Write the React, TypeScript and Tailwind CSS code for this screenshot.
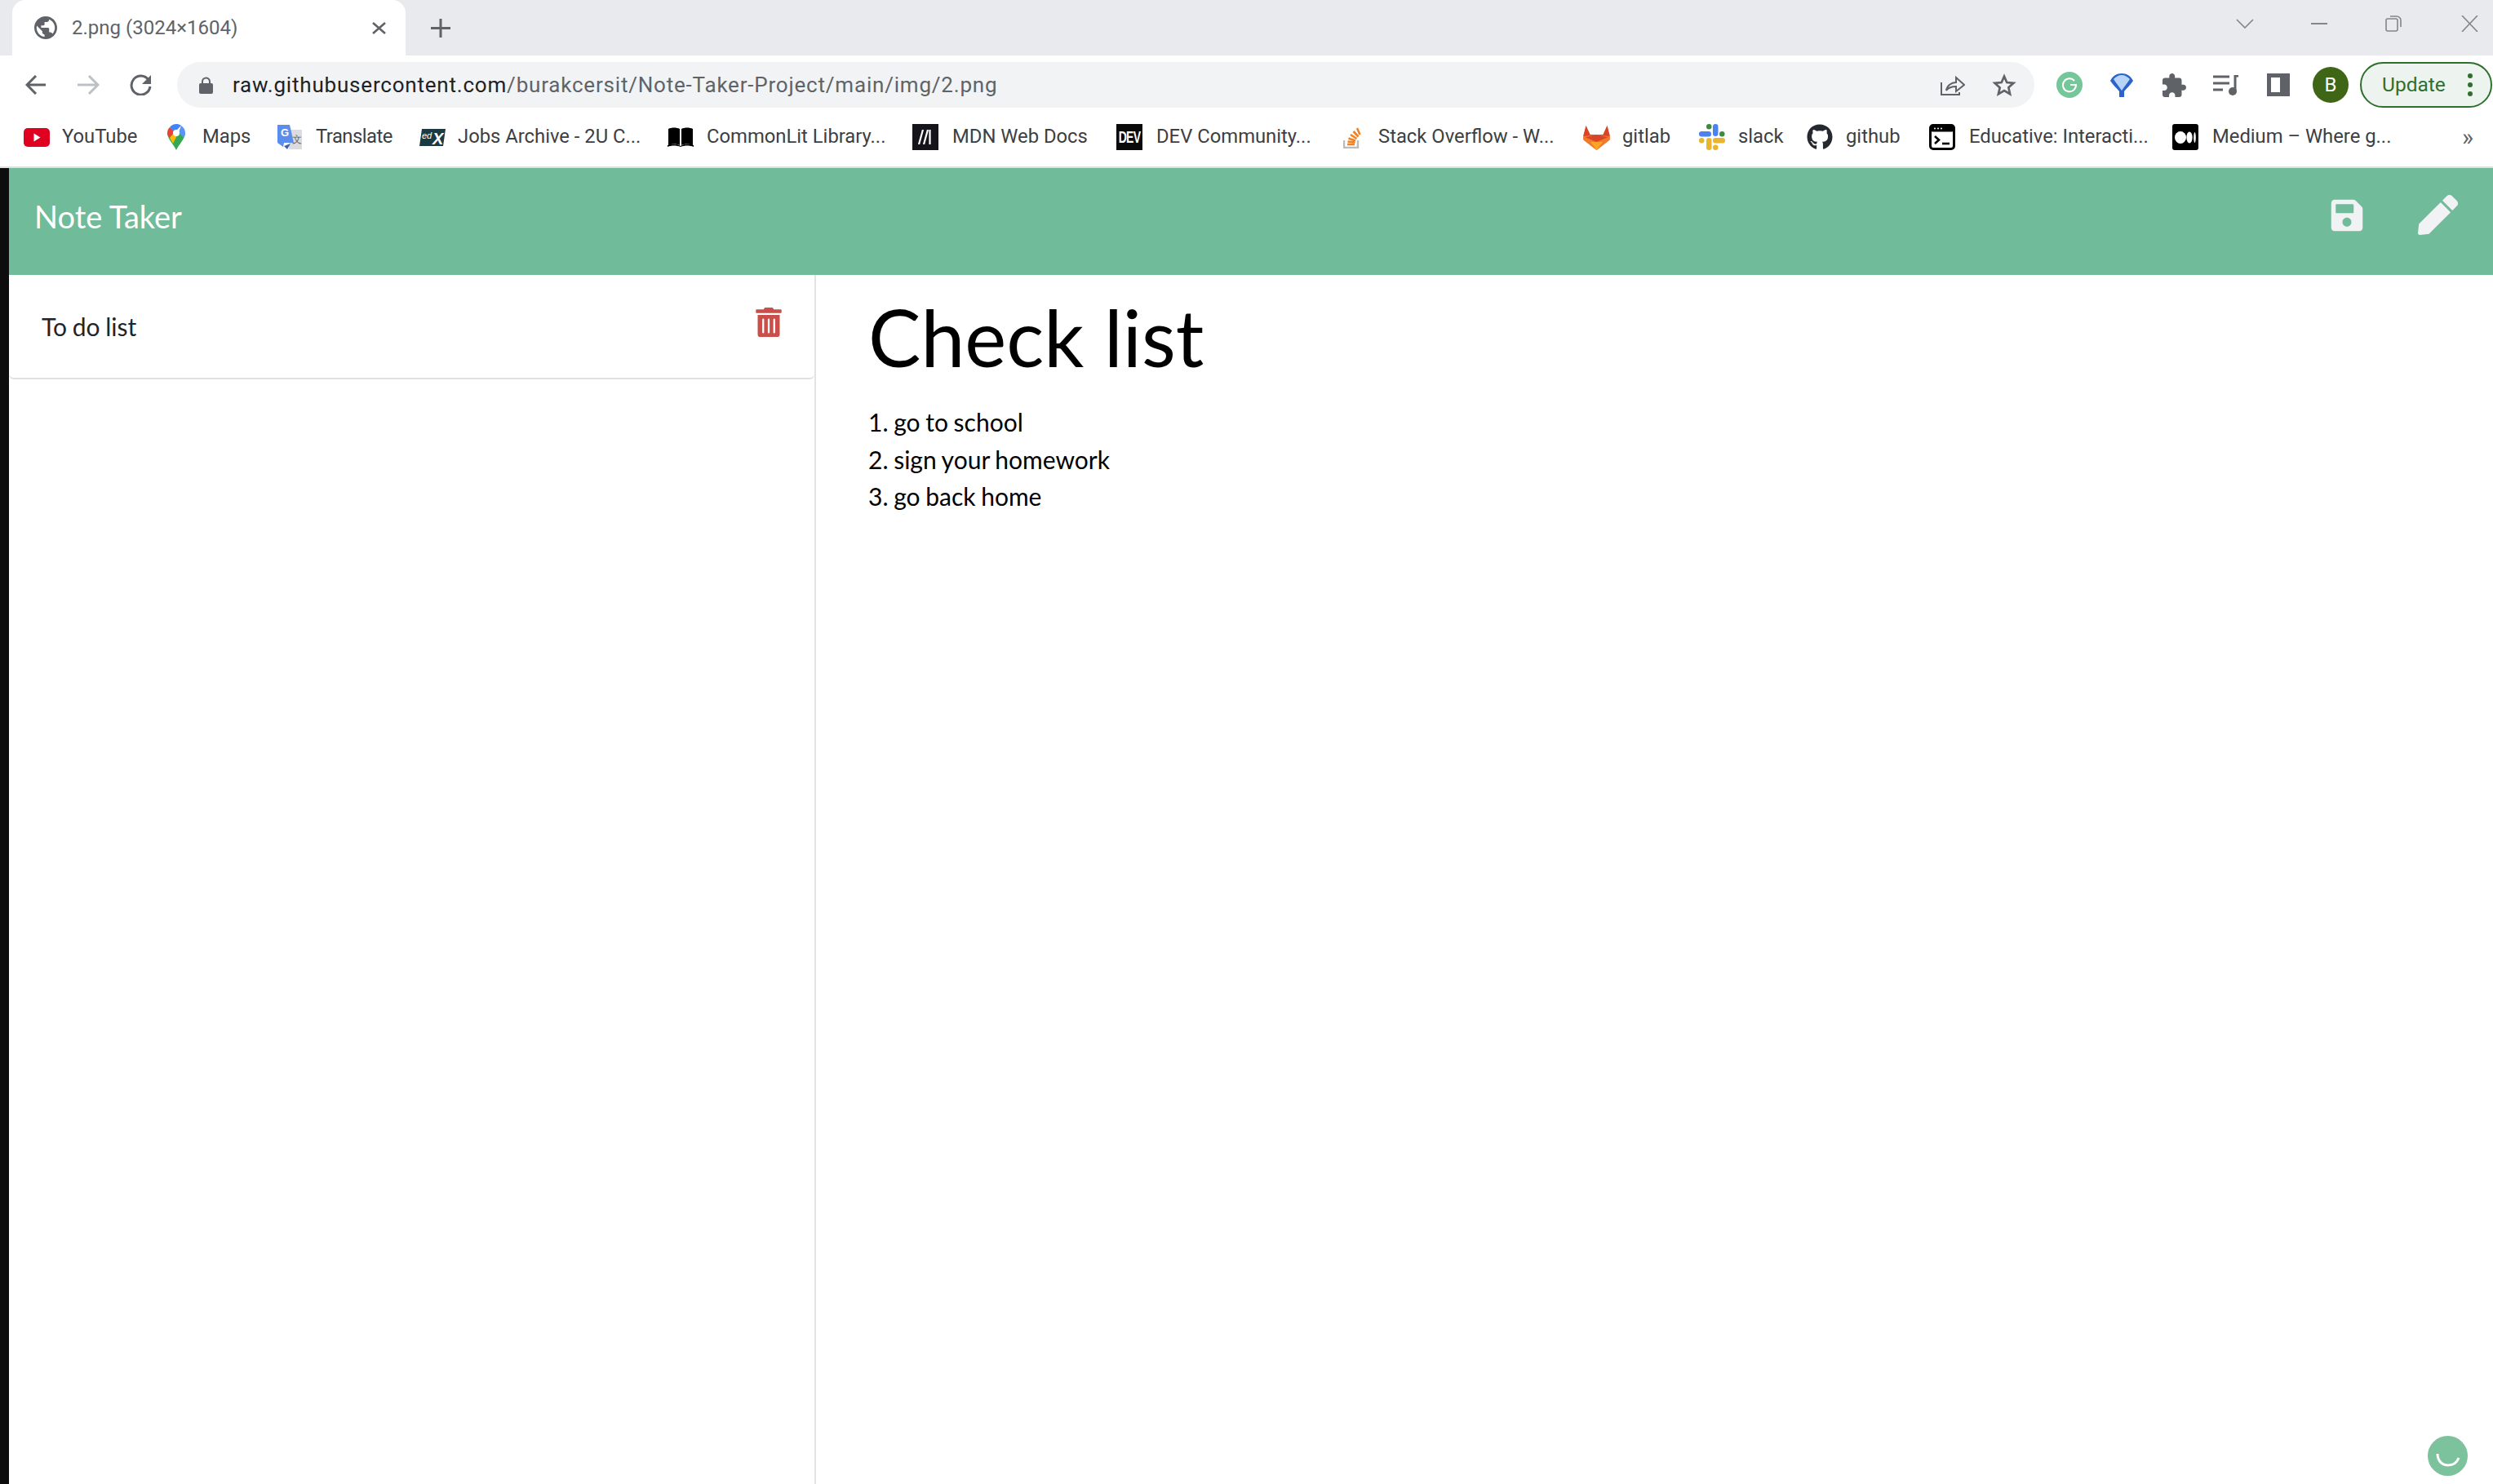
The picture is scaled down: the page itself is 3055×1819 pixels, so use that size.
import React from "react";
import { FaSave, FaPen, FaTrashAlt, FaGithub } from "react-icons/fa";

const Ic = ({ w, h, vb, children, cls = "" }: { w: number; h: number; vb: string; children: React.ReactNode; cls?: string }) => (
  <svg width={w} height={h} viewBox={vb} className={"shrink-0 " + cls}>{children}</svg>
);

const YouTube = () => (
  <Ic w={32} h={23} vb="0 0 32 23"><rect width="32" height="23" rx="5" fill="#e0001f" /><path d="M12.5 6.5v10l8-5z" fill="#fff" /></Ic>
);
const Maps = () => (
  <Ic w={22} h={32} vb="0 0 22 32">
    <path d="M11 32C8 25 0 18 0 11h22c0 7-8 14-11 21z" fill="#34a853" />
    <path d="M0 11C0 8 1 6 3 4l6 5-6 8C1 15 0 13 0 11z" fill="#ea4335" />
    <path d="M3 17l6-7h5L7 24z" fill="#fbbc04" />
    <path d="M3 4a11 11 0 0 1 8-4c2 0 4 .6 6 2l-8 8z" fill="#4285f4" />
    <path d="M17 2c3 2 5 5 5 9 0 2-1 4-2 6l-6-7z" fill="#5a95f5" />
    <circle cx="11" cy="11" r="4" fill="#fff" />
  </Ic>
);
const Translate = () => (
  <Ic w={30} h={30} vb="0 0 30 30">
    <path d="M14 6h16v24H14z" fill="#dadce0" />
    <path d="M0 0h15l5 22H8l-1 5-7-5z" fill="#5b8def" />
    <path d="M16 23l-4 7-4-4z" fill="#3c5fb8" />
    <text x="4" y="14" fontSize="13" fontWeight="700" fill="#fff" fontFamily="Liberation Sans">G</text>
    <text x="18" y="22" fontSize="12" fill="#5f6368" fontFamily="Liberation Serif">文</text>
  </Ic>
);
const Edx = () => (
  <Ic w={32} h={21} vb="0 0 32 21">
    <path d="M3 0h29l-3 21H0z" fill="#1c3a41" />
    <text x="3" y="12" fontSize="11" fontStyle="italic" fill="#fff" fontFamily="Liberation Sans">ed</text>
    <text x="16" y="19" fontSize="20" fontWeight="700" fontStyle="italic" fill="#fff" fontFamily="Liberation Sans">X</text>
  </Ic>
);
const Book = () => (
  <Ic w={32} h={24} vb="0 0 32 24">
    <path d="M1 2c4-2 10-2 14 0v20c-4-2-10-2-14 0zM17 2c4-2 10-2 14 0v20c-4-2-10-2-14 0z" fill="#000" />
    <path d="M0 22c5-2 11-2 16 1 5-3 11-3 16-1v2c-5-2-11-2-16 0-5-2-11-2-16 0z" fill="#000" />
  </Ic>
);
const Mdn = () => (
  <div className="w-[32px] h-[32px] bg-[#15141a] flex items-center justify-center shrink-0">
    <Ic w={20} h={18} vb="0 0 20 18"><path d="M7 0L2 18M13 0L8 18M15.500 0v18" fill="none" stroke="#fff" strokeWidth="2.200" /></Ic>
  </div>
);
const Dev = () => (
  <div className="w-[32px] h-[32px] bg-[#0a0a0a] flex items-center justify-center shrink-0 text-white text-[14px] font-bold font-['Liberation_Sans'] tracking-[-0.8px]">
    <span className="scale-y-[1.4]">DEV</span>
  </div>
);
const So = () => (
  <Ic w={22} h={28} vb="0 0 22 28">
    <path d="M1 18v9h17v-9" fill="none" stroke="#bcbbbb" strokeWidth="2.4" />
    <path d="M5 23h9M5.500 19.500l9 1M6.500 15.500l8.500 3M9 11l7.500 5M12.500 7l6 6.500M17 3l3.500 8" stroke="#f48024" strokeWidth="2.6" fill="none" />
  </Ic>
);
const Gitlab = () => (
  <Ic w={33} h={31} vb="0 0 33 31">
    <path d="M16.500 31L0 18 3.500 1l5 11h16l5-11L33 18z" fill="#fc6d26" />
    <path d="M3.500 1l5 11h16l5-11L33 14 16.500 12 0 14z" fill="#d8442a" />
    <path d="M0 16l16.500-4L33 16l-9 5H9z" fill="#d8442a" />
    <path d="M0 14l16.500 7L33 14l-1 5-15.500 12L1 19z" fill="#ee7a2d" />
    <path d="M16.500 31L9 21h15z" fill="#fca326" />
  </Ic>
);
const Slack = () => (
  <Ic w={32} h={32} vb="0 0 32 32">
    <rect x="0" y="9" width="15" height="6.500" rx="3.200" fill="#4c82f0" />
    <rect x="9" y="0" width="6.500" height="6.500" rx="3.200" fill="#3e8a3e" />
    <rect x="17" y="0" width="6.500" height="15" rx="3.200" fill="#4c82f0" />
    <rect x="25" y="9" width="6.500" height="6.500" rx="3.200" fill="#3e8a3e" />
    <rect x="0" y="17" width="6.500" height="6.500" rx="3.200" fill="#e9b52f" />
    <rect x="9" y="17" width="6.500" height="15" rx="3.200" fill="#e9b52f" />
    <rect x="17" y="17" width="15" height="6.500" rx="3.200" fill="#e9b52f" />
    <rect x="17" y="25.500" width="6.500" height="6.500" rx="3.200" fill="#e9b52f" />
  </Ic>
);
const Educ = () => (
  <Ic w={32} h={32} vb="0 0 32 32">
    <rect x="1.500" y="1.500" width="29" height="29" rx="3.500" fill="#fff" stroke="#000" strokeWidth="3" />
    <rect x="1.500" y="1.500" width="29" height="8" rx="3" fill="#000" />
    <circle cx="7" cy="5.500" r="1" fill="#fff" /><circle cx="11" cy="5.500" r="1" fill="#fff" /><circle cx="15" cy="5.500" r="1" fill="#fff" />
    <path d="M7 15l5 4.500-5 4.500" fill="none" stroke="#000" strokeWidth="2.600" />
    <path d="M16 24h9" stroke="#000" strokeWidth="2.600" />
  </Ic>
);
const Medium = () => (
  <div className="w-[32px] h-[32px] rounded-[3px] bg-black flex items-center justify-center shrink-0">
    <Ic w={26} h={15} vb="0 0 26 15"><ellipse cx="7" cy="7.500" rx="7" ry="7.500" fill="#fff" /><ellipse cx="18" cy="7.500" rx="3.600" ry="7" fill="#fff" /><ellipse cx="24.500" cy="7.500" rx="1.300" ry="6.500" fill="#fff" /></Ic>
  </div>
);

const marks = [
  { t: "YouTube", icon: <YouTube />, c: "w-[92px]", g: "ml-[0px] gap-[15px]" },
  { t: "Maps", icon: <Maps />, c: "w-[60px]", g: "ml-[37px] gap-[21px]" },
  { t: "Translate", icon: <Translate />, c: "w-[97px] tracking-[-0.5px]", g: "ml-[32px] gap-[17px]" },
  { t: "Jobs Archive - 2U C...", icon: <Edx />, c: "w-[224px]", g: "ml-[30px] gap-[15px]" },
  { t: "CommonLit Library...", icon: <Book />, c: "w-[219px]", g: "ml-[33px] gap-[16px]" },
  { t: "MDN Web Docs", icon: <Mdn />, c: "w-[169px]", g: "ml-[33px] gap-[17px]" },
  { t: "DEV Community...", icon: <Dev />, c: "w-[191px]", g: "ml-[32px] gap-[17px]" },
  { t: "Stack Overflow - W...", icon: <So />, c: "w-[219px]", g: "ml-[38px] gap-[21px]" },
  { t: "gitlab", icon: <Gitlab />, c: "w-[59px]", g: "ml-[32px] gap-[15px]" },
  { t: "slack", icon: <Slack />, c: "w-[50px]", g: "ml-[35px] gap-[16px]" },
  { t: "github", icon: <FaGithub className="text-[32px] text-[#24292f] shrink-0" />, c: "w-[69px]", g: "ml-[34px] gap-[16px]" },
  { t: "Educative: Interacti...", icon: <Educ />, c: "w-[215px]", g: "ml-[33px] gap-[17px]" },
  { t: "Medium – Where g...", icon: <Medium />, c: "w-[219px]", g: "ml-[34px] gap-[17px]" },
];

export default function App() {
  return (
    <div className="relative w-[3055px] h-[1819px] flex flex-col overflow-hidden bg-white font-['Roboto']">
      {/* tab strip */}
      <div className="h-[68px] bg-[#e8eaed] flex items-end shrink-0">
        <div className="ml-[15px] w-[482px] h-[68px] bg-white rounded-t-[16px] flex items-center pl-[27px]">
          <svg width="28" height="28" viewBox="2 2 20 20" className="shrink-0">
            <path fill="#5f6368" d="M12 2C6.480 2 2 6.480 2 12s4.480 10 10 10 10-4.480 10-10S17.520 2 12 2zm-1 17.930c-3.950-.490-7-3.850-7-7.930 0-.620.080-1.210.210-1.790L9 15v1c0 1.100.900 2 2 2v1.930zm6.900-2.540c-.260-.810-1-1.390-1.900-1.390h-1v-3c0-.550-.450-1-1-1H8v-2h2c.550 0 1-.450 1-1V7h2c1.100 0 2-.900 2-2v-.410c2.930 1.190 5 4.060 5 7.410 0 2.080-.800 3.970-2.100 5.390z" />
          </svg>
          <span className="ml-[18px] w-[200px] text-[24px] text-[#5f6368] whitespace-nowrap">2.png (3024×1604)</span>
          <svg width="17" height="15" viewBox="0 0 17 15" className="ml-[168px]"><path d="M1 1l15 13M16 1L1 14" stroke="#5f6368" strokeWidth="2.6" /></svg>
        </div>
        <svg width="24" height="23" viewBox="0 0 24 23" className="ml-[31px] mb-[22px]"><path d="M12 0v23M0 11.500h24" stroke="#5f6368" strokeWidth="3" /></svg>
        <div className="flex-1" />
        <svg width="22" height="12" viewBox="0 0 22 12" className="mb-[33px]"><path d="M1 1l10 10L21 1" fill="none" stroke="#80868b" strokeWidth="1.6" /></svg>
        <div className="ml-[70px] mb-[38px] w-[20px] h-[2px] bg-[#80868b]" />
        <svg width="21" height="20" viewBox="0 0 21 20" className="ml-[71px] mb-[29px]"><rect x="1" y="4" width="14" height="15" rx="2" fill="none" stroke="#80868b" strokeWidth="1.6" /><path d="M6 1h8a5 5 0 0 1 5 5v8" fill="none" stroke="#80868b" strokeWidth="1.6" /></svg>
        <svg width="21" height="20" viewBox="0 0 21 20" className="ml-[72px] mr-[18px] mb-[29px]"><path d="M1 0l19 20M20 0L1 20" stroke="#80868b" strokeWidth="1.6" /></svg>
      </div>

      {/* toolbar */}
      <div className="h-[64px] shrink-0 flex items-end">
        <svg width="26" height="24" viewBox="0 0 26 24" className="ml-[31px] mb-[16px]"><path d="M25 12H3M13 1L2 12l11 11" fill="none" stroke="#5f6368" strokeWidth="3" /></svg>
        <svg width="28" height="24" viewBox="0 0 28 24" className="ml-[37px] mb-[16px]"><path d="M1 12h24M15 1l11 11-11 11" fill="none" stroke="#bdc1c6" strokeWidth="3" /></svg>
        <svg width="27" height="26" viewBox="0 0 27 26" className="ml-[37px] mb-[15px]"><path d="M23 7a11.500 11.500 0 1 0 2 8" fill="none" stroke="#5f6368" strokeWidth="3" /><path d="M26 1v11H15z" fill="#5f6368" /></svg>
        <div className="ml-[31px] h-[56px] flex-1 max-w-[2276px] rounded-full bg-[#f1f3f4] flex items-center">
          <svg width="17" height="21" viewBox="0 0 17 21" className="ml-[27px] shrink-0"><path d="M4 9V6a4.500 4.500 0 0 1 9 0v3" fill="none" stroke="#5f6368" strokeWidth="2" /><rect y="8" width="17" height="13" rx="2" fill="#5f6368" /></svg>
          <span className="ml-[24px] text-[26px] tracking-[0.8px] whitespace-nowrap text-[#202124]">raw.githubusercontent.com<span className="text-[#5f6368]">/burakcersit/Note-Taker-Project/main/img/2.png</span></span>
          <div className="flex-1" />
          <svg width="30" height="26" viewBox="0 0 30 26" className="shrink-0"><path d="M1 10v15h22v-3M7 20c1-6 6-10 12-10V4l10 9-10 8v-6c-5 0-9 1-12 5z" fill="none" stroke="#5f6368" strokeWidth="2" /></svg>
          <svg width="30" height="29" viewBox="0 0 24 24" className="ml-[33px] mr-[22px] shrink-0"><path d="M12 3l2.700 6.200 6.800.6-5.100 4.500 1.500 6.600L12 17.500 6.100 21l1.500-6.600L2.500 9.800l6.800-.6z" fill="none" stroke="#5f6368" strokeWidth="2.200" /></svg>
        </div>
        <div className="flex items-center h-[56px]">
          <div className="ml-[27px] w-[32px] h-[32px] rounded-full bg-[#75c79a] flex items-center justify-center">
            <svg width="20" height="20" viewBox="0 0 20 20"><path d="M16 5a8 8 0 1 0 2 5h-7" fill="none" stroke="#fff" strokeWidth="2" /></svg>
          </div>
          <svg width="28" height="29" viewBox="0 0 28 29" className="ml-[34px]"><path d="M0 9C3 3 8 0 14 0s11 3 14 9c-3 5-8 9-11 13v7h-6v-7C8 18 3 14 0 9z" fill="#2a63c9" /><path d="M4 7c3-3 6-5 10-5s7 2 10 5c-3 5-7 9-10 14C11 16 7 12 4 7z" fill="#b7d4f7" /></svg>
          <svg width="29" height="29" viewBox="2 1 21 21" className="ml-[36px]"><path fill="#5f6368" d="M20.500 11H19V7c0-1.100-.900-2-2-2h-4V3.500C13 2.120 11.880 1 10.500 1S8 2.120 8 3.500V5H4c-1.100 0-1.990.900-1.990 2v3.800H3.500c1.490 0 2.700 1.210 2.700 2.700s-1.210 2.700-2.700 2.700H2V20c0 1.100.900 2 2 2h3.800v-1.500c0-1.490 1.210-2.700 2.700-2.700 1.490 0 2.700 1.210 2.700 2.700V22H17c1.100 0 2-.900 2-2v-4h1.500c1.380 0 2.500-1.120 2.500-2.500S21.880 11 20.500 11z" /></svg>
          <svg width="31" height="25" viewBox="0 0 31 25" className="ml-[33px]"><path d="M0 2h20M0 10h20M0 18h12" stroke="#5f6368" strokeWidth="3" /><path d="M27 19V1h4" fill="none" stroke="#5f6368" strokeWidth="3" /><circle cx="24" cy="20" r="5" fill="#5f6368" /></svg>
          <div className="ml-[35px] w-[28px] h-[28px] border-[5px] border-r-[12px] border-[#5f6368] bg-white" />
          <div className="ml-[28px] w-[44px] h-[44px] rounded-full bg-[#3f6616] text-white text-[24px] flex items-center justify-center">B</div>
          <div className="ml-[14px] w-[162px] h-[56px] rounded-full border-2 border-[#2e6f2e] bg-[#edf3ee] flex items-center pl-[25px]">
            <span className="text-[24.500px] text-[#2e6f2e] whitespace-nowrap w-[85px]">Update</span>
            <div className="ml-[20px] flex flex-col gap-[5px]">
              <div className="w-[6px] h-[6px] rounded-full bg-[#2e6f2e]" />
              <div className="w-[6px] h-[6px] rounded-full bg-[#2e6f2e]" />
              <div className="w-[6px] h-[6px] rounded-full bg-[#2e6f2e]" />
            </div>
          </div>
        </div>
      </div>

      {/* bookmarks */}
      <div className="h-[72px] shrink-0 flex items-center pl-[29px] text-[23.800px] text-[#3c4043]">
        {marks.map((m) => (
          <div key={m.t} className={"flex items-center shrink-0 " + m.g}>
            {m.icon}
            <span className={"whitespace-nowrap " + m.c}>{m.t}</span>
          </div>
        ))}
        <span className="ml-[87px] text-[30px] text-[#5f6368] leading-none">»</span>
      </div>
      <div className="h-[2px] shrink-0 bg-[#dedfe1]" />

      {/* page */}
      <div className="flex-1 flex min-h-0 font-['Lato']">
        <div className="w-[11px] shrink-0 bg-[#0d0d0d]" />
        <div className="flex-1 flex flex-col min-w-0">
          <header className="h-[131px] shrink-0 bg-[#70bb99] flex items-start pt-[31px] pl-[31px] pr-[43px]">
            <h2 className="text-[38px] leading-[56px] text-white">Note Taker</h2>
            <div className="flex-1" />
            <FaSave className="mt-[5px] text-[#f0f2f4] w-[44px] h-[44px]" />
            <FaPen className="ml-[65px] text-[#f0f2f4] w-[49px] h-[49px] mt-[2px]" />
          </header>
          <div className="flex-1 flex min-h-0">
            <aside className="w-[989px] shrink-0 border-r-2 border-[#e3e3e3]">
              <div className="h-[128px] border-b-2 border-[#e0e0e0] rounded-b-[6px] flex items-start pl-[40px] pr-[40px]">
                <span className="mt-[41px] text-[30px] leading-[44px] text-[#212529] [word-spacing:-1px]">To do list</span>
                <div className="flex-1" />
                <FaTrashAlt className="mt-[40px] w-[32px] h-[36px] text-[#c9504a]" />
              </div>
            </aside>
            <main className="flex-1 pl-[64px] pt-[18px] text-black">
              <h1 className="text-[96.500px] leading-[116px] text-black">Check list</h1>
              <ol className="mt-[24px] text-[30px] leading-[45.500px] [word-spacing:-1px]">
                <li>1. go to school</li>
                <li>2. sign your homework</li>
                <li>3. go back home</li>
              </ol>
            </main>
          </div>
        </div>
      </div>

      {/* floating status */}
      <div className="absolute left-[2975px] top-[1760px] w-[49px] h-[49px] rounded-full bg-[#7cc29c] flex items-center justify-center">
        <svg width="30" height="20" viewBox="0 0 30 20" className="mt-[10px]"><path d="M2 2c0 9 6 14 13 14s11-4 13-9" fill="none" stroke="#fff" strokeWidth="3" /></svg>
      </div>
    </div>
  );
}
